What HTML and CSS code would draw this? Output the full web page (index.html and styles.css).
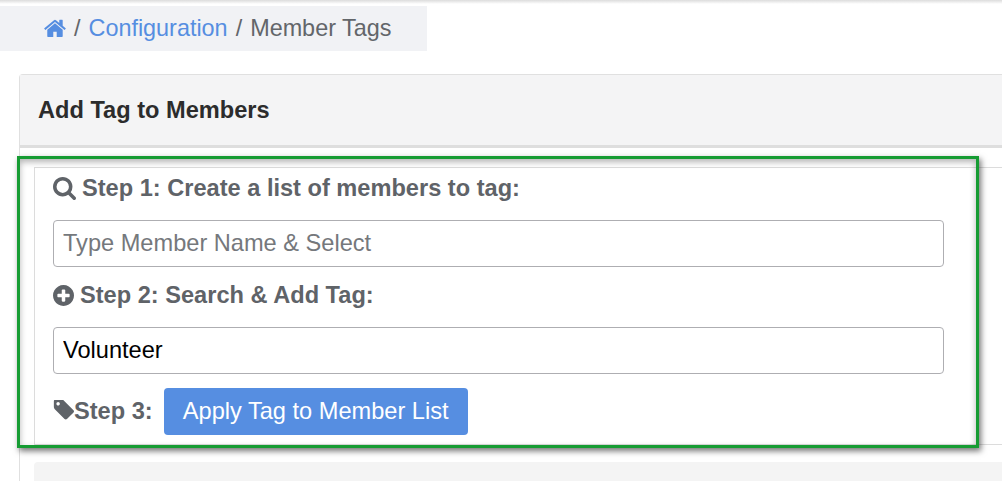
FILE: index.html
```html
<!DOCTYPE html>
<html lang="en">
<head>
<meta charset="utf-8">
<title>Member Tags</title>
<link rel="stylesheet" href="styles.css">
</head>
<body>
<div class="topbar"></div>
<nav class="crumbs">
  <a class="crumb-link" href="#"><svg class="icon icon-home" viewBox="97 192 1600 1344"><path d="M1472 992v480q0 26-19 45t-45 19h-384v-384h-256v384h-384q-26 0-45-19t-19-45v-480q0-1 .5-3t.5-3l575-474 575 474q1 2 1 6zm223-69l-62 74q-8 9-21 11h-3q-13 0-21-7l-692-577-692 577q-12 8-24 7-13-2-21-11l-62-74q-8-10-7-23.500t11-21.500l719-599q32-26 76-26t76 26l244 204v-195q0-14 9-23t23-9h192q14 0 23 9t9 23v408l219 182q10 8 11 21.500t-7 23.500z"/></svg></a>
  <span class="sep">/</span>
  <a class="crumb-link" href="#">Configuration</a>
  <span class="sep">/</span>
  <span>Member Tags</span>
</nav>
<main class="card">
  <header class="card-head"><h2 class="card-title">Add Tag to Members</h2></header>
  <div class="card-body">
    <section class="steps">
      <h3 class="step-label"><svg class="icon icon-search" viewBox="64 128 1664 1664"><path d="M1216 832q0-185-131.500-316.500t-316.500-131.500-316.500 131.500-131.500 316.500 131.500 316.500 316.500 131.500 316.500-131.500 131.500-316.500zm512 832q0 52-38 90t-90 38q-54 0-90-38l-343-342q-179 124-399 124-143 0-273.500-55.500t-225-150-150-225-55.500-273.500 55.500-273.500 150-225 225-150 273.500-55.500 273.500 55.500 225 150 150 225 55.500 273.500q0 220-124 399l343 343q37 37 37 90z"/></svg>Step 1: Create a list of members to tag:</h3>
      <input class="field" type="text" placeholder="Type Member Name &amp; Select">
      <h3 class="step-label step-two"><svg class="icon icon-plus" viewBox="128 128 1536 1536"><path d="M1344 960v-128q0-26-19-45t-45-19h-256v-256q0-26-19-45t-45-19h-128q-26 0-45 19t-19 45v256h-256q-26 0-45 19t-19 45v128q0 26 19 45t45 19h256v256q0 26 19 45t45 19h128q26 0 45-19t19-45v-256h256q26 0 45-19t19-45zm320-64q0 209-103 385.500t-279.500 279.500-385.500 103-385.500-103-279.500-279.500-103-385.500 103-385.500 279.500-279.500 385.500-103 385.500 103 279.500 279.500 103 385.500z"/></svg>Step 2: Search &amp; Add Tag:</h3>
      <input class="field" type="text" value="Volunteer">
      <div class="apply-row">
        <h3 class="step-label step-three"><svg class="icon icon-tag" viewBox="64 192 1579 1536"><path d="M576 448q0-53-37.500-90.500t-90.500-37.500-90.500 37.500-37.500 90.500 37.500 90.500 90.500 37.500 90.500-37.500 37.500-90.500zm1067 576q0 53-37 90l-491 492q-39 37-91 37-53 0-90-37l-715-716q-38-37-64.500-101t-26.500-117v-416q0-52 38-90t90-38h416q53 0 117 26.500t102 64.500l715 714q37 39 37 91z"/></svg>Step 3:</h3>
        <button class="apply-btn" type="button">Apply Tag to Member List</button>
      </div>
    </section>
    <div class="next-panel"></div>
  </div>
</main>
<div class="highlight"></div>
</body>
</html>
```
FILE: styles.css
```css
* { box-sizing: border-box; }
html, body { margin: 0; height: 481px; overflow: hidden; background: #fff; }
body { position: relative; font-family: "Liberation Sans", Arial, sans-serif; color: #5f6368; }
.topbar { height: 4px; background: linear-gradient(#dcdcdc, #fff); margin-bottom: 2px; }
.crumbs { width: 427px; height: 45px; padding-left: 44px; background: #f1f2f5; display: flex; align-items: center; font-size: 23.4px; gap: 8px; color: #63666a; }
.crumb-link { color: #568ee1; text-decoration: none; display: flex; align-items: center; }
.icon { fill: currentColor; display: block; flex: none; }
.icon-home { width: 22px; height: 18px; margin: 0 0 2px; }
.card { width: 1100px; height: 407px; margin: 23px 0 0 19px; border: 1px solid #e0e0e0; border-radius: 4px 0 0 0; border-bottom: 0; }
.card-head { height: 73px; background: #f4f4f5; border-bottom: 3px solid #dedede; display: flex; align-items: center; padding-left: 18px; }
.card-title { margin: 0; font-size: 23.6px; font-weight: 700; color: #2c2c2c; }
.card-body { padding: 19px 0 0 14px; }
.steps { height: 278px; border: 1px solid #dcdcdc; padding: 0 0 0 18px; }
.step-label { margin: 0; display: flex; align-items: center; font-size: 23.6px; font-weight: 700; color: #5f6368; line-height: 40px; height: 40px; }
.icon-search { width: 23px; height: 23px; margin-right: 6px; }
.icon-plus { width: 21px; height: 21px; margin-right: 6px; }
.field { display: block; width: 891px; height: 47px; margin: 12px 0 0; padding: 0 10px 0 9px; border: 1px solid #aeaeb2; border-radius: 4px; background: #fff; font: 23.6px "Liberation Sans", Arial, sans-serif; color: #000; outline: none; }
.field::placeholder { color: #75787c; opacity: 1; }
.step-two { margin-top: 8px; }
.apply-row { display: flex; align-items: center; margin-top: 14px; gap: 11px; }
.step-three { height: 40px; margin-bottom: 2px; }
.icon-tag { width: 21px; height: 21px; }
.apply-btn { width: 304px; height: 47px; border: 0; border-radius: 4px; background: #568ee1; color: #fff; font: 23.6px "Liberation Sans", Arial, sans-serif; padding: 0; }
.next-panel { height: 60px; margin-top: 17px; background: #f4f4f4; border-radius: 4px 0 0 0; }
.highlight { position: absolute; left: 17px; top: 156px; width: 962px; height: 292px; border: 3px solid #169c33; box-shadow: 2px 3px 6px rgba(0,0,0,.55), inset 0 3px 6px rgba(0,0,0,.3); pointer-events: none; }
```
